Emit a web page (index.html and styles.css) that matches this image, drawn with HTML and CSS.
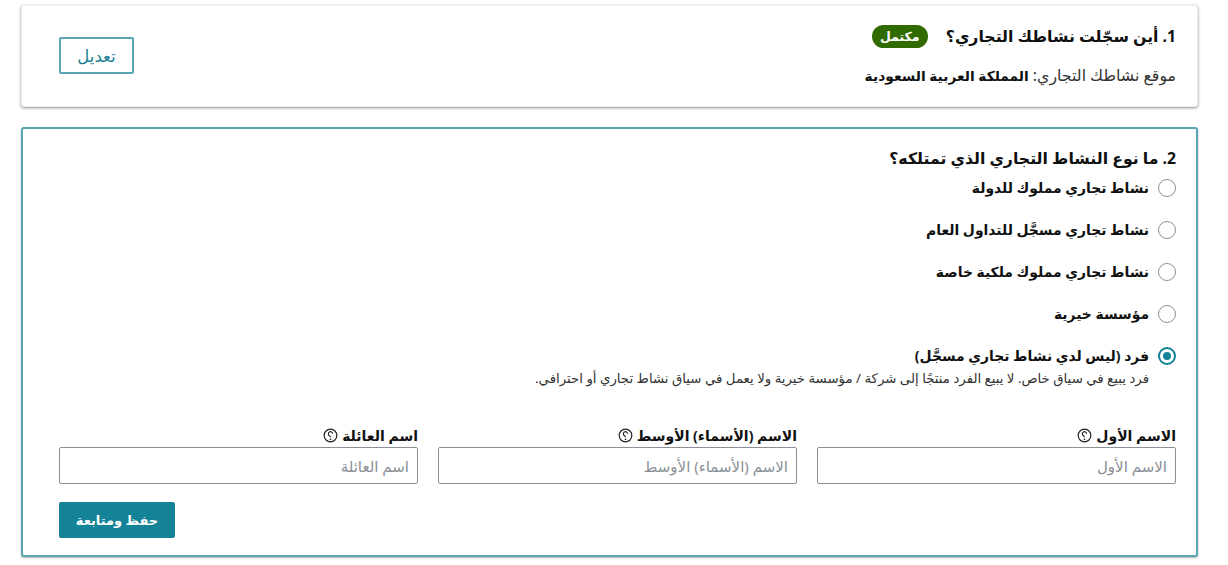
FILE: index.html
```html
<!DOCTYPE html>
<html lang="ar" dir="rtl">
<head>
<meta charset="utf-8">
<title>نوع النشاط التجاري</title>
<link rel="stylesheet" href="styles.css">
</head>
<body>
<section class="card card-done">
  <div class="done-text">
    <div class="heading-row">
      <h2 class="heading">1. أين سجّلت نشاطك التجاري؟</h2>
      <span class="badge">مكتمل</span>
    </div>
    <p class="summary">موقع نشاطك التجاري: <b>المملكة العربية السعودية</b></p>
  </div>
  <button class="btn-edit" type="button">تعديل</button>
</section>
<section class="card card-active">
  <h2 class="heading">2. ما نوع النشاط التجاري الذي تمتلكه؟</h2>
  <div class="options">
    <label class="option"><span class="radio"></span><span class="option-label">نشاط تجاري مملوك للدولة</span></label>
    <label class="option"><span class="radio"></span><span class="option-label">نشاط تجاري مسجَّل للتداول العام</span></label>
    <label class="option"><span class="radio"></span><span class="option-label">نشاط تجاري مملوك ملكية خاصة</span></label>
    <label class="option"><span class="radio"></span><span class="option-label">مؤسسة خيرية</span></label>
    <label class="option option-on"><span class="radio radio-on"></span><span class="option-text"><span class="option-label">فرد (ليس لدي نشاط تجاري مسجَّل)</span><small class="hint">فرد يبيع في سياق خاص. لا يبيع الفرد منتجًا إلى شركة / مؤسسة خيرية ولا يعمل في سياق نشاط تجاري أو احترافي.</small></span></label>
  </div>
  <div class="fields">
    <div class="field">
      <div class="field-label"><span>الاسم الأول</span><svg class="help" viewBox="0 0 14 14"><circle cx="7" cy="7" r="5.9"/><path d="M5 5.4a2 2 0 1 1 3 1.8c-.7.4-1 .8-1 1.5"/><circle class="dot" cx="7" cy="10.5" r=".8"/></svg></div>
      <input class="input" placeholder="الاسم الأول">
    </div>
    <div class="field">
      <div class="field-label"><span>الاسم (الأسماء) الأوسط</span><svg class="help" viewBox="0 0 14 14"><circle cx="7" cy="7" r="5.9"/><path d="M5 5.4a2 2 0 1 1 3 1.8c-.7.4-1 .8-1 1.5"/><circle class="dot" cx="7" cy="10.5" r=".8"/></svg></div>
      <input class="input" placeholder="الاسم (الأسماء) الأوسط">
    </div>
    <div class="field">
      <div class="field-label"><span>اسم العائلة</span><svg class="help" viewBox="0 0 14 14"><circle cx="7" cy="7" r="5.9"/><path d="M5 5.4a2 2 0 1 1 3 1.8c-.7.4-1 .8-1 1.5"/><circle class="dot" cx="7" cy="10.5" r=".8"/></svg></div>
      <input class="input" placeholder="اسم العائلة">
    </div>
  </div>
  <button class="btn-save" type="button">حفظ ومتابعة</button>
</section>
</body>
</html>
```
FILE: styles.css
```css
* { box-sizing: border-box; }
html, body { margin: 0; background: #fff; }
body {
  padding: 5px 30px 8px 21px;
  font-family: "Noto Sans", "DejaVu Sans", sans-serif;
  color: #0f1111;
  overflow: hidden;
  height: 565px;
}
.card { background: #fff; border-radius: 3px; }
.card-done {
  height: 102px;
  padding: 0 21px 2px 37px;
  display: flex;
  justify-content: space-between;
  align-items: center;
  border: 1px solid #eee;
  box-shadow: 0 1px 3px rgba(0,0,0,.45);
}
.done-text { padding-top: 2px; }
.heading-row { display: flex; align-items: center; gap: 18px; height: 26px; margin-top: -2px; }
.heading { margin: 0; font-size: 15.75px; font-weight: 700; line-height: 24px; }
.badge {
  background: #2f6b00;
  color: #fff;
  font-size: 12.5px;
  font-weight: 700;
  border-radius: 12px;
  width: 56px;
  height: 23px;
  display: flex;
  align-items: center;
  justify-content: center;
}
.summary { margin: 15px 0 0; font-size: 15.8px; line-height: 22px; color: #333; }
.summary b { color: #0f1111; font-size: 13.8px; }
.btn-edit {
  width: 75px;
  height: 37px;
  background: #fff;
  border: 2px solid #5aa5b3;
  border-radius: 2px;
  color: #1a7f93;
  font: 16.5px "Noto Sans", "DejaVu Sans", sans-serif;
}
.card-active {
  margin-top: 20px;
  height: 430px;
  padding: 17px 20px 0 36px;
  border: 2px solid #5aa5b3;
  box-shadow: 0 1px 2px rgba(0,0,0,.3);
}
.options { display: flex; flex-direction: column; padding-top: 6px; }
.option { display: flex; align-items: flex-start; gap: 9px; height: 42px; padding-top: 2px; }
.option-on { height: auto; }
.radio {
  width: 18px;
  height: 18px;
  margin-top: 1px;
  flex: none;
  border: 1px solid #8d9096;
  border-radius: 50%;
  background: #fff;
}
.radio-on {
  border: 2px solid #148397;
  padding: 3px;
  background: #148397 content-box;
}
.option-label { font-size: 13.9px; font-weight: 700; line-height: 20px; display: block; }
.option-text { display: block; }
.hint { display: block; margin-top: 2px; font-size: 13.3px; line-height: 21px; color: #333; }
.fields {
  margin-top: 35px;
  display: grid;
  grid-template-columns: repeat(3, 1fr);
  gap: 20px;
}
.field-label { display: flex; align-items: center; gap: 4px; height: 23px; font-size: 14px; font-weight: 700; }
.help { width: 15px; height: 15px; fill: none; stroke: #222; stroke-width: 1.1; transform: scaleX(-1); }
.help .dot { fill: #222; stroke: none; }
.input {
  display: block;
  width: 100%;
  height: 37px;
  padding: 0 8px;
  border: 1px solid #8d9096;
  border-radius: 2px;
  font: 15px "Noto Sans", "DejaVu Sans", sans-serif;
  background: #fff;
}
.input::placeholder { color: #8a8f96; opacity: 1; }
.btn-save {
  display: block;
  margin-top: 18px;
  margin-right: auto;
  width: 116px;
  height: 36px;
  background: #148397;
  border: 0;
  border-radius: 2px;
  color: #fff;
  font: 700 13px "Noto Sans", "DejaVu Sans", sans-serif;
}
```
